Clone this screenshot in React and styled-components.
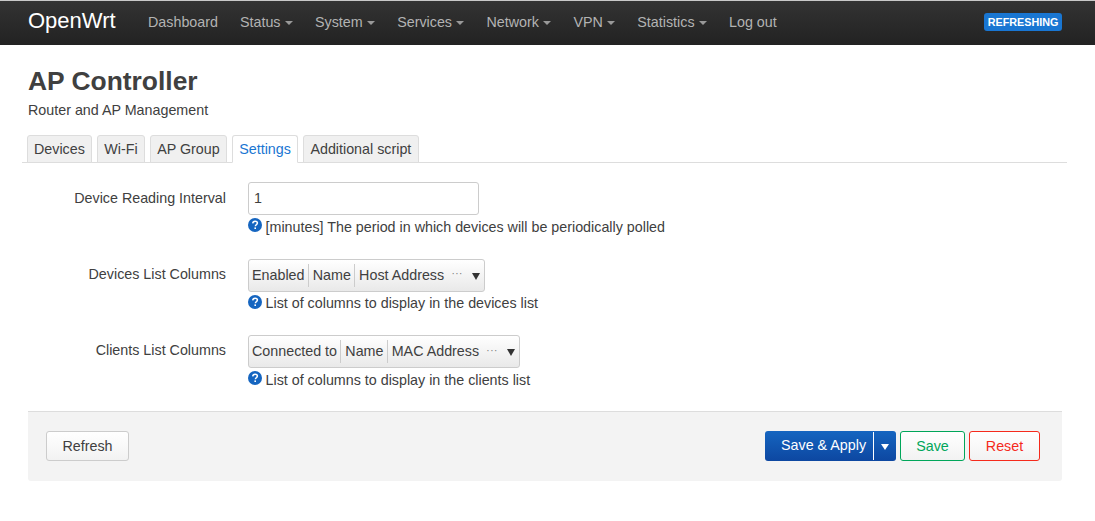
import styled, { createGlobalStyle } from "styled-components";

const GlobalStyle = createGlobalStyle`
html, body { margin: 0; padding: 0; background: #fff; }
body {
  font-family: "Liberation Sans", Arial, sans-serif;
  font-size: 14.3px;
  line-height: 1.42857;
  color: #404040;
}
* { box-sizing: border-box; }
`;

const Navbar = styled.header`
display: flex;
align-items: center;
height: 45px;
padding: 0 33px 0 28px;
border-top: 1px solid #c8c8c8;
background: linear-gradient(#333333, #222222);
`;
const Brand = styled.div`
color: #fff;
font-size: 22px;
width: 120px;
margin-top: -4px;
`;
const NavItems = styled.nav`
display: flex;
gap: 22px;
flex: 1;
margin-top: -2px;
`;
const NavItem = styled.span`
display: flex;
align-items: center;
color: #b3b3b3;
white-space: nowrap;
`;
const Caret = styled.i`
width: 0;
height: 0;
margin-left: 4.5px;
margin-top: 2px;
border-top: 4px solid #999;
border-left: 4px solid transparent;
border-right: 4px solid transparent;
`;
const Badge = styled.span`
background: #1976d2;
color: #fff;
font-size: 10.8px;
font-weight: bold;
line-height: 18px;
height: 18px;
padding: 0 3.5px;
border-radius: 3px;
margin-top: -2px;
`;

const Main = styled.main`
padding: 0 33px 0 28px;
`;
const Title = styled.h2`
margin: 20px 0 0;
font-size: 26.4px;
line-height: 32px;
font-weight: bold;
color: #404040;
`;
const Subtitle = styled.p`
margin: 3px 0 0;
color: #404040;
`;
const Tabs = styled.ul`
display: flex;
gap: 5px;
list-style: none;
margin: 15px -5px 0 -6px;
padding: 0 0 0 4.75px;
height: 28px;
border-bottom: 1px solid #ddd;
`;
const Tab = styled.li`
height: 28px;
padding: 3px 6.25px 0;
border: 1px solid #ddd;
border-bottom: ${(p) => (p.$active ? "1px solid #fff" : "1px solid #ddd")};
border-radius: 3px 3px 0 0;
background: ${(p) => (p.$active ? "#fff" : "#f0f0f0")};
color: ${(p) => (p.$active ? "#1976d2" : "#404040")};
white-space: nowrap;
`;

const Form = styled.section`
padding-top: 19px;
`;
const Row = styled.div`
display: grid;
grid-template-columns: 198px 1fr;
column-gap: 22px;
margin-bottom: ${(p) => p.$gap}px;
`;
const Label = styled.label`
text-align: right;
padding-top: ${(p) => p.$top || 6}px;
color: #404040;
`;
const Field = styled.div`
display: flex;
flex-direction: column;
align-items: flex-start;
`;
const TextInput = styled.div`
width: 231px;
height: 33px;
padding: 5px 5px;
border: 1px solid #ccc;
border-radius: 3px;
background: #fff;
`;
const Dropdown = styled.div`
display: flex;
align-items: center;
height: 33px;
padding: 0 3px;
border: 1px solid #ccc;
border-radius: 3px;
background: linear-gradient(#fff, #e9e9e9);
white-space: nowrap;
`;
const Choice = styled.span`
display: flex;
align-items: center;
height: 23px;
margin-top: -0.4px;
padding: 0 3.25px 0 4px;
border-left: 1px solid #ccc;
&:first-child { border-left: none; padding-left: 0; }
`;
const More = styled.span`
font-size: 10px;
letter-spacing: 0.5px;
color: #777;
margin: -2px 9px 0 4px;
`;
const Arrow = styled.span`
width: 0;
height: 0;
margin: 2px 1px 0 0;
border-top: 7px solid #333;
border-left: 4px solid transparent;
border-right: 4px solid transparent;
`;
const Help = styled.div`
display: flex;
align-items: flex-start;
gap: 3.5px;
margin-top: 1.5px;
color: #404040;
white-space: nowrap;
`;
const HelpIcon = styled.svg`
width: 14px;
height: 14px;
margin-top: 1.5px;
flex: none;
`;

const ActionBar = styled.footer`
display: flex;
justify-content: space-between;
align-items: center;
height: 70px;
padding: 0 22px 0 18px;
border-top: 1px solid #ddd;
border-radius: 0 0 3px 3px;
background: #f3f3f3;
`;
const ButtonGroup = styled.div`
display: flex;
gap: 4px;
`;
const Button = styled.button`
height: 30px;
width: ${(p) => p.$width}px;
padding: 0;
font: inherit;
color: ${(p) => p.$color || "#404040"};
border: 1px solid ${(p) => p.$color || "#ccc"};
border-radius: 3px;
background: linear-gradient(#fff, #f2f2f2);
`;
const ApplyGroup = styled.div`
display: flex;
height: 30px;
width: 131px;
border-radius: 3px;
color: #fff;
background: linear-gradient(#1565c0, #0d47a1);
`;
const ApplyLabel = styled.span`
flex: 1;
line-height: 28px;
padding-left: 16px;
`;
const ApplyArrow = styled.span`
display: flex;
align-items: center;
justify-content: center;
width: 23px;
margin: 1px 0;
border-left: 1px solid #fff;
&::after {
  content: "";
  margin-top: 2px;
  border-top: 6px solid #fff;
  border-left: 4px solid transparent;
  border-right: 4px solid transparent;
}
`;

const navItems = [
  ["Dashboard"],
  ["Status", true],
  ["System", true],
  ["Services", true],
  ["Network", true],
  ["VPN", true],
  ["Statistics", true],
  ["Log out"],
];

function HelpMark() {
  return (
    <HelpIcon viewBox="0 0 14 14">
      <circle cx="7" cy="7" r="7" fill="#1565c0" />
      <path d="M4.7 5.4C4.8 4 5.8 3.2 7.1 3.2c1.4 0 2.3.8 2.3 1.9 0 1-.6 1.4-1.2 1.8-.6.4-.8.7-.8 1.4" fill="none" stroke="#fff" strokeWidth="1.5" />
      <rect x="6.4" y="9.4" width="1.6" height="1.6" fill="#fff" />
    </HelpIcon>
  );
}

function ColumnSelect({ columns }) {
  return (
    <Dropdown>
      {columns.map((column) => (
        <Choice key={column}>{column}</Choice>
      ))}
      <More>···</More>
      <Arrow />
    </Dropdown>
  );
}

export default function App() {
  return (
    <>
      <GlobalStyle />
      <Navbar>
        <Brand>OpenWrt</Brand>
        <NavItems>
          {navItems.map(([name, caret]) => (
            <NavItem key={name}>
              {name}
              {caret && <Caret />}
            </NavItem>
          ))}
        </NavItems>
        <Badge>REFRESHING</Badge>
      </Navbar>
      <Main>
        <Title>AP Controller</Title>
        <Subtitle>Router and AP Management</Subtitle>
        <Tabs>
          <Tab>Devices</Tab>
          <Tab>Wi-Fi</Tab>
          <Tab>AP Group</Tab>
          <Tab $active>Settings</Tab>
          <Tab>Additional script</Tab>
        </Tabs>
        <Form>
          <Row $gap={21.5}>
            <Label>Device Reading Interval</Label>
            <Field>
              <TextInput>1</TextInput>
              <Help><HelpMark />[minutes] The period in which devices will be periodically polled</Help>
            </Field>
          </Row>
          <Row $gap={21.5}>
            <Label $top={5}>Devices List Columns</Label>
            <Field>
              <ColumnSelect columns={["Enabled", "Name", "Host Address"]} />
              <Help><HelpMark />List of columns to display in the devices list</Help>
            </Field>
          </Row>
          <Row $gap={20.5}>
            <Label $top={5}>Clients List Columns</Label>
            <Field>
              <ColumnSelect columns={["Connected to", "Name", "MAC Address"]} />
              <Help><HelpMark />List of columns to display in the clients list</Help>
            </Field>
          </Row>
        </Form>
        <ActionBar>
          <Button $width={83}>Refresh</Button>
          <ButtonGroup>
            <ApplyGroup>
              <ApplyLabel>Save &amp; Apply</ApplyLabel>
              <ApplyArrow />
            </ApplyGroup>
            <Button $width={65} $color="#00a65a">Save</Button>
            <Button $width={71} $color="#f52a1c">Reset</Button>
          </ButtonGroup>
        </ActionBar>
      </Main>
    </>
  );
}
